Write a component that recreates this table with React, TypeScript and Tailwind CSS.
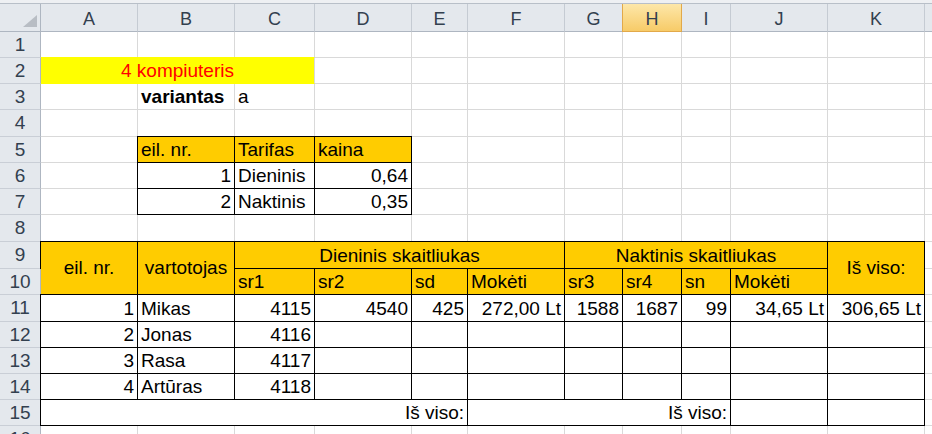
import React from "react";

type Align = "l" | "r" | "c";
interface CellProps {
  pos?: string;
  text?: React.ReactNode;
  align?: Align;
  border?: boolean;
  fill?: "white" | "orange" | "yellow";
  center?: boolean;
  cls?: string;
}

function Cell({ pos = "", text, align = "l", border = false, fill = "white", center = false, cls = "" }: CellProps) {
  const base = "flex whitespace-nowrap text-[19px] leading-[22px] text-black";
  const b = border
    ? "-mt-px -ml-px border border-black"
    : fill === "yellow"
    ? "-mt-px border-y border-r border-y-[#ffff00] border-r-[#d9d9d9]"
    : "border-r border-b border-[#d9d9d9]";
  const f = fill === "orange" ? "bg-[#ffcc00]" : fill === "yellow" ? "bg-[#ffff00]" : "bg-white";
  const a = align === "r" ? "justify-end pr-[3px]" : align === "c" ? "justify-center" : "justify-start pl-[3px]";
  const v = center ? "items-center" : "items-end pb-[1px]";
  return <div className={[base, b, f, a, v, pos, cls].join(" ")}>{text}</div>;
}

function RowHead({ n }: { n: number }) {
  return (
    <div className="flex items-center justify-center border-r border-b border-r-[#aeb6c1] border-b-[#c9ced6] bg-[#e4e8ed] text-[19px] leading-[22px] text-[#33404f]">
      {n}
    </div>
  );
}

function empties(n: number, key: string, border = false) {
  return Array.from({ length: n }, (_, i) => <Cell key={key + i} border={border} />);
}

const COLS = ["A", "B", "C", "D", "E", "F", "G", "H", "I", "J", "K", "L"];

export default function App() {
  return (
    <div className="w-[932px] h-[434px] overflow-hidden bg-white font-['Liberation_Sans',Arial,sans-serif]">
      <div className="h-[4px] bg-[#eef0f3] border-b border-[#b8bfc8]" />
      <div className="grid w-max grid-cols-[41px_97px_97px_80px_97px_56px_97px_58px_59px_49px_97px_97px_97px] grid-rows-[28px_26px_26px_26px_27px_26px_26px_26px_27px_27px_26px_27px_26px_26px_26px_26px_26px_26px]">
        {/* header row */}
        <div className="flex items-end justify-end border-r border-b border-r-[#aeb6c1] border-b-[#aeb6c1] bg-[#e4e8ed] pr-[3px] pb-[4px]">
          <svg width="14" height="12" viewBox="0 0 14 12">
            <polygon points="14,0 14,12 0,12" fill="#b8bdc4" />
          </svg>
        </div>
        {COLS.map((c) =>
          c === "H" ? (
            <div
              key={c}
              className="-ml-px flex items-center justify-center border-l border-r border-b border-[#e2a94a] bg-[linear-gradient(to_bottom,#fde7a9,#f7cb68)] pt-[2px] text-[18px] leading-[22px] text-[#33404f]"
            >
              {c}
            </div>
          ) : (
            <div
              key={c}
              className="flex items-center justify-center border-r border-b border-r-[#c5cbd3] border-b-[#aeb6c1] bg-[#e4e8ed] pt-[2px] text-[18px] leading-[22px] text-[#33404f]"
            >
              {c}
            </div>
          )
        )}

        {/* row 1 */}
        <RowHead n={1} />
        {empties(12, "r1")}

        {/* row 2 */}
        <RowHead n={2} />
        <Cell pos="col-span-3" fill="yellow" align="c" text={<span className="text-[#ff0000]">4 kompiuteris</span>} />
        {empties(9, "r2")}

        {/* row 3 */}
        <RowHead n={3} />
        <Cell />
        <Cell text={<span className="font-bold">variantas</span>} />
        <Cell text="a" />
        {empties(9, "r3")}

        {/* row 4 */}
        <RowHead n={4} />
        {empties(12, "r4")}

        {/* row 5 */}
        <RowHead n={5} />
        <Cell />
        <Cell border fill="orange" text="eil. nr." />
        <Cell border fill="orange" text="Tarifas" />
        <Cell border fill="orange" text="kaina" />
        {empties(8, "r5")}

        {/* row 6 */}
        <RowHead n={6} />
        <Cell />
        <Cell border align="r" text="1" />
        <Cell border text="Dieninis" />
        <Cell border align="r" text="0,64" />
        {empties(8, "r6")}

        {/* row 7 */}
        <RowHead n={7} />
        <Cell />
        <Cell border align="r" text="2" />
        <Cell border text="Naktinis" />
        <Cell border align="r" text="0,35" />
        {empties(8, "r7")}

        {/* row 8 */}
        <RowHead n={8} />
        {empties(12, "r8")}

        {/* row 9 */}
        <RowHead n={9} />
        <Cell pos="row-span-2" border fill="orange" align="c" center text="eil. nr." />
        <Cell pos="row-span-2" border fill="orange" align="c" center text="vartotojas" />
        <Cell pos="col-span-4" border fill="orange" align="c" text="Dieninis skaitliukas" />
        <Cell pos="col-span-4" border fill="orange" align="c" text="Naktinis skaitliukas" />
        <Cell pos="row-span-2" border fill="orange" align="c" center text="Iš viso:" />
        <Cell />

        {/* row 10 */}
        <RowHead n={10} />
        <Cell border fill="orange" text="sr1" />
        <Cell border fill="orange" text="sr2" />
        <Cell border fill="orange" text="sd" />
        <Cell border fill="orange" text="Mokėti" />
        <Cell border fill="orange" text="sr3" />
        <Cell border fill="orange" text="sr4" />
        <Cell border fill="orange" text="sn" />
        <Cell border fill="orange" text="Mokėti" />
        <Cell />

        {/* row 11 */}
        <RowHead n={11} />
        <Cell border align="r" text="1" />
        <Cell border text="Mikas" />
        <Cell border align="r" text="4115" />
        <Cell border align="r" text="4540" />
        <Cell border align="r" text="425" />
        <Cell border align="r" text="272,00 Lt" />
        <Cell border align="r" text="1588" />
        <Cell border align="r" text="1687" />
        <Cell border align="r" text="99" />
        <Cell border align="r" text="34,65 Lt" />
        <Cell border align="r" text="306,65 Lt" />
        <Cell />

        {/* row 12 */}
        <RowHead n={12} />
        <Cell border align="r" text="2" />
        <Cell border text="Jonas" />
        <Cell border align="r" text="4116" />
        {empties(8, "r12", true)}
        <Cell />

        {/* row 13 */}
        <RowHead n={13} />
        <Cell border align="r" text="3" />
        <Cell border text="Rasa" />
        <Cell border align="r" text="4117" />
        {empties(8, "r13", true)}
        <Cell />

        {/* row 14 */}
        <RowHead n={14} />
        <Cell border align="r" text="4" />
        <Cell border text="Artūras" />
        <Cell border align="r" text="4118" />
        {empties(8, "r14", true)}
        <Cell />

        {/* row 15 */}
        <RowHead n={15} />
        <Cell pos="col-span-5" border align="r" text="Iš viso:" />
        <Cell pos="col-span-4" border align="r" text="Iš viso:" />
        <Cell border />
        <Cell border />
        <Cell />

        {/* row 16 */}
        <RowHead n={16} />
        {empties(12, "r16")}

        {/* row 17 */}
        <RowHead n={17} />
        {empties(12, "r17")}
      </div>
    </div>
  );
}
